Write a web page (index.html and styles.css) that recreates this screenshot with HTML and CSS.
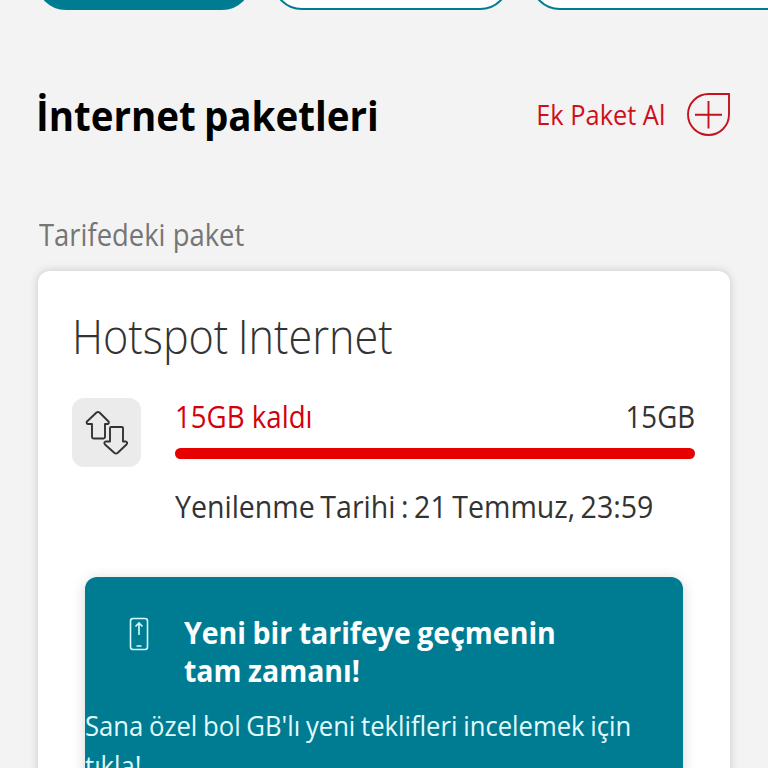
FILE: index.html
```html
<!DOCTYPE html>
<html lang="tr">
<head>
    <meta charset="UTF-8">
    <meta name="viewport" content="width=device-width, initial-scale=1.0">
    <title>İnternet paketleri</title>
    <link rel="stylesheet" href="styles.css">
</head>
<body>
    <nav class="tabs">
        <div class="tab tab-first active"></div>
        <div class="tab tab-second"></div>
        <div class="tab tab-third"></div>
    </nav>

    <header class="section-header">
        <h1>İnternet paketleri</h1>
        <a class="add-package">
            <span class="add-label">Ek Paket Al</span>
            <svg width="44" height="44" viewBox="0 0 44 44" fill="none" stroke="#c4121f" stroke-width="1.9">
                <path d="M22.500 1H43V21.500A20.500 20.500 0 1 1 22.500 1Z"/>
                <path d="M22.500 8V35.500M9 21.800H36"/>
            </svg>
        </a>
    </header>

    <p class="subtitle">Tarifedeki paket</p>

    <section class="card">
        <h2>Hotspot Internet</h2>
        <div class="usage">
            <div class="usage-icon">
                <svg width="44" height="44" viewBox="0 0 44 44" fill="none" stroke="#333" stroke-width="1.9" stroke-linejoin="round">
                    <path d="M11.500 1.500Q13 0.500 14.500 1.500L23.500 10.500Q24.500 12.500 22.500 13H20V26Q20 27.500 18.500 27.500H8.500Q7 27.500 7 26V13H3Q1 12.500 2 10.500Z"/>
                    <path d="M26 16H37Q38 16 38 17V30.500H41Q43 31.500 41.500 33.500L32.500 42Q31 43 29.500 42L20 33.500Q18.500 31.500 20.500 30.500H25V17Q25 16 26 16Z"/>
                </svg>
            </div>
            <div class="usage-info">
                <div class="usage-row">
                    <span class="remaining">15GB kaldı</span>
                    <span class="total">15GB</span>
                </div>
                <div class="bar"><div class="bar-fill" style="width: 100%"></div></div>
                <p class="renewal">Yenilenme Tarihi : 21 Temmuz, 23:59</p>
            </div>
        </div>

        <div class="offer">
            <div class="offer-head">
                <svg width="20" height="34" viewBox="0 0 20 34" fill="none" stroke="#d5fbff" stroke-width="1.6">
                    <rect x="1.500" y="1.500" width="17" height="31" rx="2.500"/>
                    <path d="M10 18V6M6.500 9.500L10 6L13.500 9.500M7.500 29H12.500"/>
                </svg>
                <h3>Yeni bir tarifeye geçmenin<br>tam zamanı!</h3>
            </div>
            <p class="offer-text">Sana özel bol GB'lı yeni teklifleri incelemek için<br>tıkla!</p>
        </div>
    </section>
</body>
</html>
```
FILE: styles.css
```css
* {
    box-sizing: border-box;
}
html, body {
    height: 768px;
    overflow: hidden;
}
body {
    margin: 0;
    font-family: 'Open Sans', 'Noto Sans', sans-serif;
    background: #f3f3f3;
    color: #333;
}
/* slightly narrowed text */
h1, h2, h3, p, .add-label, .remaining, .total {
    margin: 0;
    white-space: nowrap;
    transform-origin: left center;
}
.tabs {
    display: flex;
    height: 10px;
    align-items: flex-end;
    gap: 24px;
    padding-left: 36px;
}
.tab {
    flex: none;
    height: 60px;
    border: 2px solid #007c92;
    border-radius: 30px;
    background: #fff;
}
.tab-first {
    width: 216px;
}
.tab-second {
    width: 238px;
    margin-left: -4px;
}
.tab-third {
    width: 300px;
    margin-left: -4px;
}
.tab.active {
    background: #007c92;
}
.section-header {
    display: flex;
    justify-content: space-between;
    align-items: center;
    height: 60px;
    margin: 75px 38px 0 36px;
}
h1 {
    font-size: 42px;
    line-height: 60px;
    font-weight: 700;
    color: #000;
    word-spacing: -2px;
    transform: scaleX(0.917);
}
.add-package {
    display: flex;
    align-items: center;
    gap: 21px;
    font-size: 27px;
    line-height: 36px;
    color: #cf0f19;
}
.add-label {
    margin-top: -1px;
    transform: scaleX(0.94);
    transform-origin: right center;
}
.subtitle {
    margin: 69px 0 0 39px;
    font-size: 31px;
    line-height: 40px;
    color: #757575;
    transform: scaleX(0.884);
}
.card {
    margin: 17px 38px 0;
    height: 560px;
    padding: 35px 35px 0 34px;
    border-radius: 12px;
    background: #fff;
    box-shadow: 0 0 10px rgba(0, 0, 0, 0.18);
}
h2 {
    font-size: 48px;
    line-height: 60px;
    font-weight: 300;
    word-spacing: -2px;
    transform: scaleX(0.899);
}
.usage {
    display: flex;
    gap: 34px;
    margin-top: 32px;
}
.usage-icon {
    display: flex;
    align-items: center;
    justify-content: center;
    flex: none;
    width: 69px;
    height: 69px;
    border-radius: 12px;
    background: #ebebeb;
}
.usage-info {
    flex: 1;
    min-width: 0;
}
.usage-row {
    display: flex;
    justify-content: space-between;
    height: 50px;
    font-size: 31px;
    line-height: 36px;
}
.remaining {
    color: #d3000d;
    transform: scaleX(0.892);
}
.total {
    transform: scaleX(0.89);
    transform-origin: right center;
}
.bar {
    height: 11px;
    border-radius: 6px;
    background: #ebebeb;
}
.bar-fill {
    height: 100%;
    border-radius: 6px;
    background: #e60000;
}
.renewal {
    margin-top: 27px;
    font-size: 31px;
    line-height: 40px;
    word-spacing: -2px;
    transform: scaleX(0.92);
}
.offer {
    margin: 51px 12px 0 13px;
    height: 240px;
    padding-top: 37px;
    border-radius: 12px;
    background: #007c92;
    box-shadow: 0 2px 14px rgba(0, 0, 0, 0.16);
    color: #fff;
}
.offer-head {
    display: flex;
    gap: 35px;
    padding-left: 44px;
}
.offer-head svg {
    margin-top: 3px;
}
h3 {
    font-size: 30px;
    line-height: 38px;
    font-weight: 700;
    word-spacing: -1px;
    transform: scaleX(0.95);
}
.offer-text {
    margin-top: 16px;
    font-size: 27px;
    line-height: 40px;
    color: #e2fbff;
    word-spacing: -1px;
    transform: scaleX(0.95);
}
```
